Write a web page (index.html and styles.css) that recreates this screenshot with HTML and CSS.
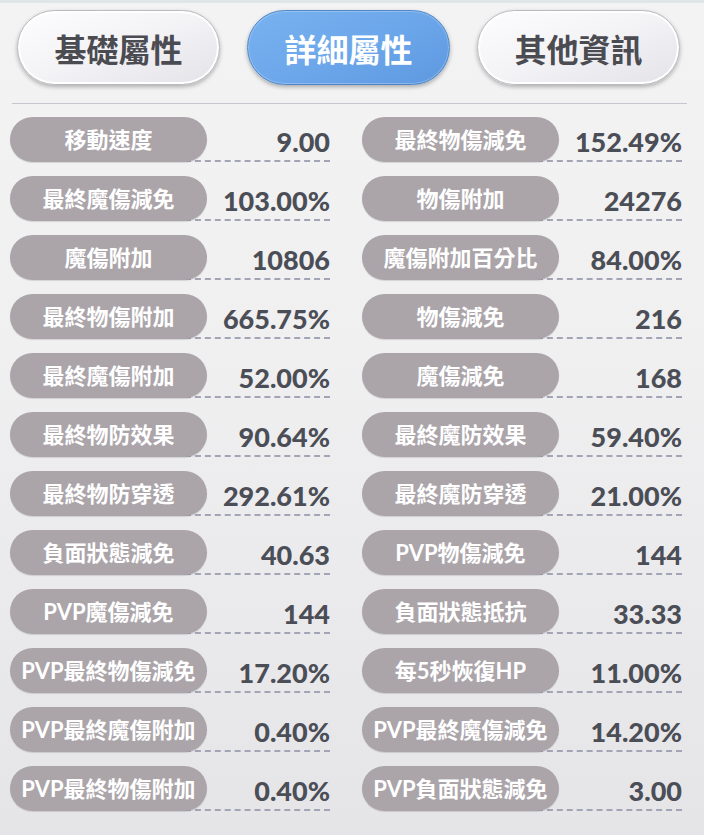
FILE: index.html
```html
<!DOCTYPE html>
<html lang="zh-Hant">
<head>
    <meta charset="UTF-8">
    <meta name="viewport" content="width=device-width, initial-scale=1.0">
    <title>詳細屬性</title>
    <link rel="stylesheet" href="styles.css">
</head>
<body>
    <div class="panel">
        <div class="tabs">
            <button class="tab">基礎屬性</button>
            <button class="tab active">詳細屬性</button>
            <button class="tab">其他資訊</button>
        </div>
        <div class="divider"></div>
        <div class="stats">
            <div class="stat"><span class="label">移動速度</span><span class="value">9.00</span></div>
            <div class="stat"><span class="label">最終物傷減免</span><span class="value">152.49%</span></div>
            <div class="stat"><span class="label">最終魔傷減免</span><span class="value">103.00%</span></div>
            <div class="stat"><span class="label">物傷附加</span><span class="value">24276</span></div>
            <div class="stat"><span class="label">魔傷附加</span><span class="value">10806</span></div>
            <div class="stat"><span class="label">魔傷附加百分比</span><span class="value">84.00%</span></div>
            <div class="stat"><span class="label">最終物傷附加</span><span class="value">665.75%</span></div>
            <div class="stat"><span class="label">物傷減免</span><span class="value">216</span></div>
            <div class="stat"><span class="label">最終魔傷附加</span><span class="value">52.00%</span></div>
            <div class="stat"><span class="label">魔傷減免</span><span class="value">168</span></div>
            <div class="stat"><span class="label">最終物防效果</span><span class="value">90.64%</span></div>
            <div class="stat"><span class="label">最終魔防效果</span><span class="value">59.40%</span></div>
            <div class="stat"><span class="label">最終物防穿透</span><span class="value">292.61%</span></div>
            <div class="stat"><span class="label">最終魔防穿透</span><span class="value">21.00%</span></div>
            <div class="stat"><span class="label">負面狀態減免</span><span class="value">40.63</span></div>
            <div class="stat"><span class="label">PVP物傷減免</span><span class="value">144</span></div>
            <div class="stat"><span class="label">PVP魔傷減免</span><span class="value">144</span></div>
            <div class="stat"><span class="label">負面狀態抵抗</span><span class="value">33.33</span></div>
            <div class="stat"><span class="label">PVP最終物傷減免</span><span class="value">17.20%</span></div>
            <div class="stat"><span class="label">每5秒恢復HP</span><span class="value">11.00%</span></div>
            <div class="stat"><span class="label">PVP最終魔傷附加</span><span class="value">0.40%</span></div>
            <div class="stat"><span class="label">PVP最終魔傷減免</span><span class="value">14.20%</span></div>
            <div class="stat"><span class="label">PVP最終物傷附加</span><span class="value">0.40%</span></div>
            <div class="stat"><span class="label">PVP負面狀態減免</span><span class="value">3.00</span></div>
        </div>
    </div>
</body>
</html>
```

FILE: styles.css
```css
html {
    box-sizing: border-box;
}

body {
    margin: 0;
    background: #e6e6e9;
    font-family: "Lato", "Noto Sans CJK TC", sans-serif;
}

.panel {
    width: 704px;
    height: 832px;
    border-top: 3px solid #e0e5e8;
    background: linear-gradient(to bottom, #f3f3f3, #f0f0f1 40%, #e5e5e8);
}

.tabs {
    display: flex;
    gap: 27px;
    padding: 7px 0 0 17px;
}

.tab {
    width: 203px;
    height: 75px;
    border: 1px solid #b9b9c1;
    border-radius: 38px;
    background: linear-gradient(160deg, #fdfdfe 0%, #f3f3f6 50%, #e2e2e8 100%);
    box-shadow: inset 0 0 0 2px #ffffff, 0 2px 4px rgba(0, 0, 0, 0.28);
    color: #4b4b52;
    font-family: "Noto Sans CJK TC", sans-serif;
    font-size: 32px;
    font-weight: 700;
    cursor: pointer;
}

.tab.active {
    border-color: #4f86c8;
    background: linear-gradient(155deg, #78b2f0 0%, #6ba6ea 55%, #5e98e0 100%);
    box-shadow: inset 0 0 0 1px rgba(255, 255, 255, 0.25), 0 2px 4px rgba(0, 0, 0, 0.3);
    color: #ffffff;
}

.divider {
    height: 1px;
    margin: 18px 17px 0 12px;
    background: #c6c6d0;
}

.stats {
    display: grid;
    grid-template-columns: 320px 320px;
    column-gap: 32px;
    row-gap: 14px;
    padding: 13px 0 0 10px;
}

.stat {
    display: flex;
    align-items: center;
    height: 45px;
}

.label {
    position: relative;
    z-index: 1;
    flex: 0 0 197px;
    height: 45px;
    line-height: 45px;
    border-radius: 23px;
    background: #aba5aa;
    box-shadow: 0 1px 1px rgba(0, 0, 0, 0.12);
    color: #ffffff;
    font-size: 22px;
    font-weight: 700;
    text-align: center;
    white-space: nowrap;
}

.value {
    flex: 1;
    align-self: stretch;
    margin-left: -22px;
    padding-top: 6px;
    box-sizing: border-box;
    display: flex;
    align-items: center;
    justify-content: flex-end;
    color: #4b4e56;
    font-size: 27px;
    font-weight: 900;
    border-bottom: 2px dashed #a3a5b6;
}
```
